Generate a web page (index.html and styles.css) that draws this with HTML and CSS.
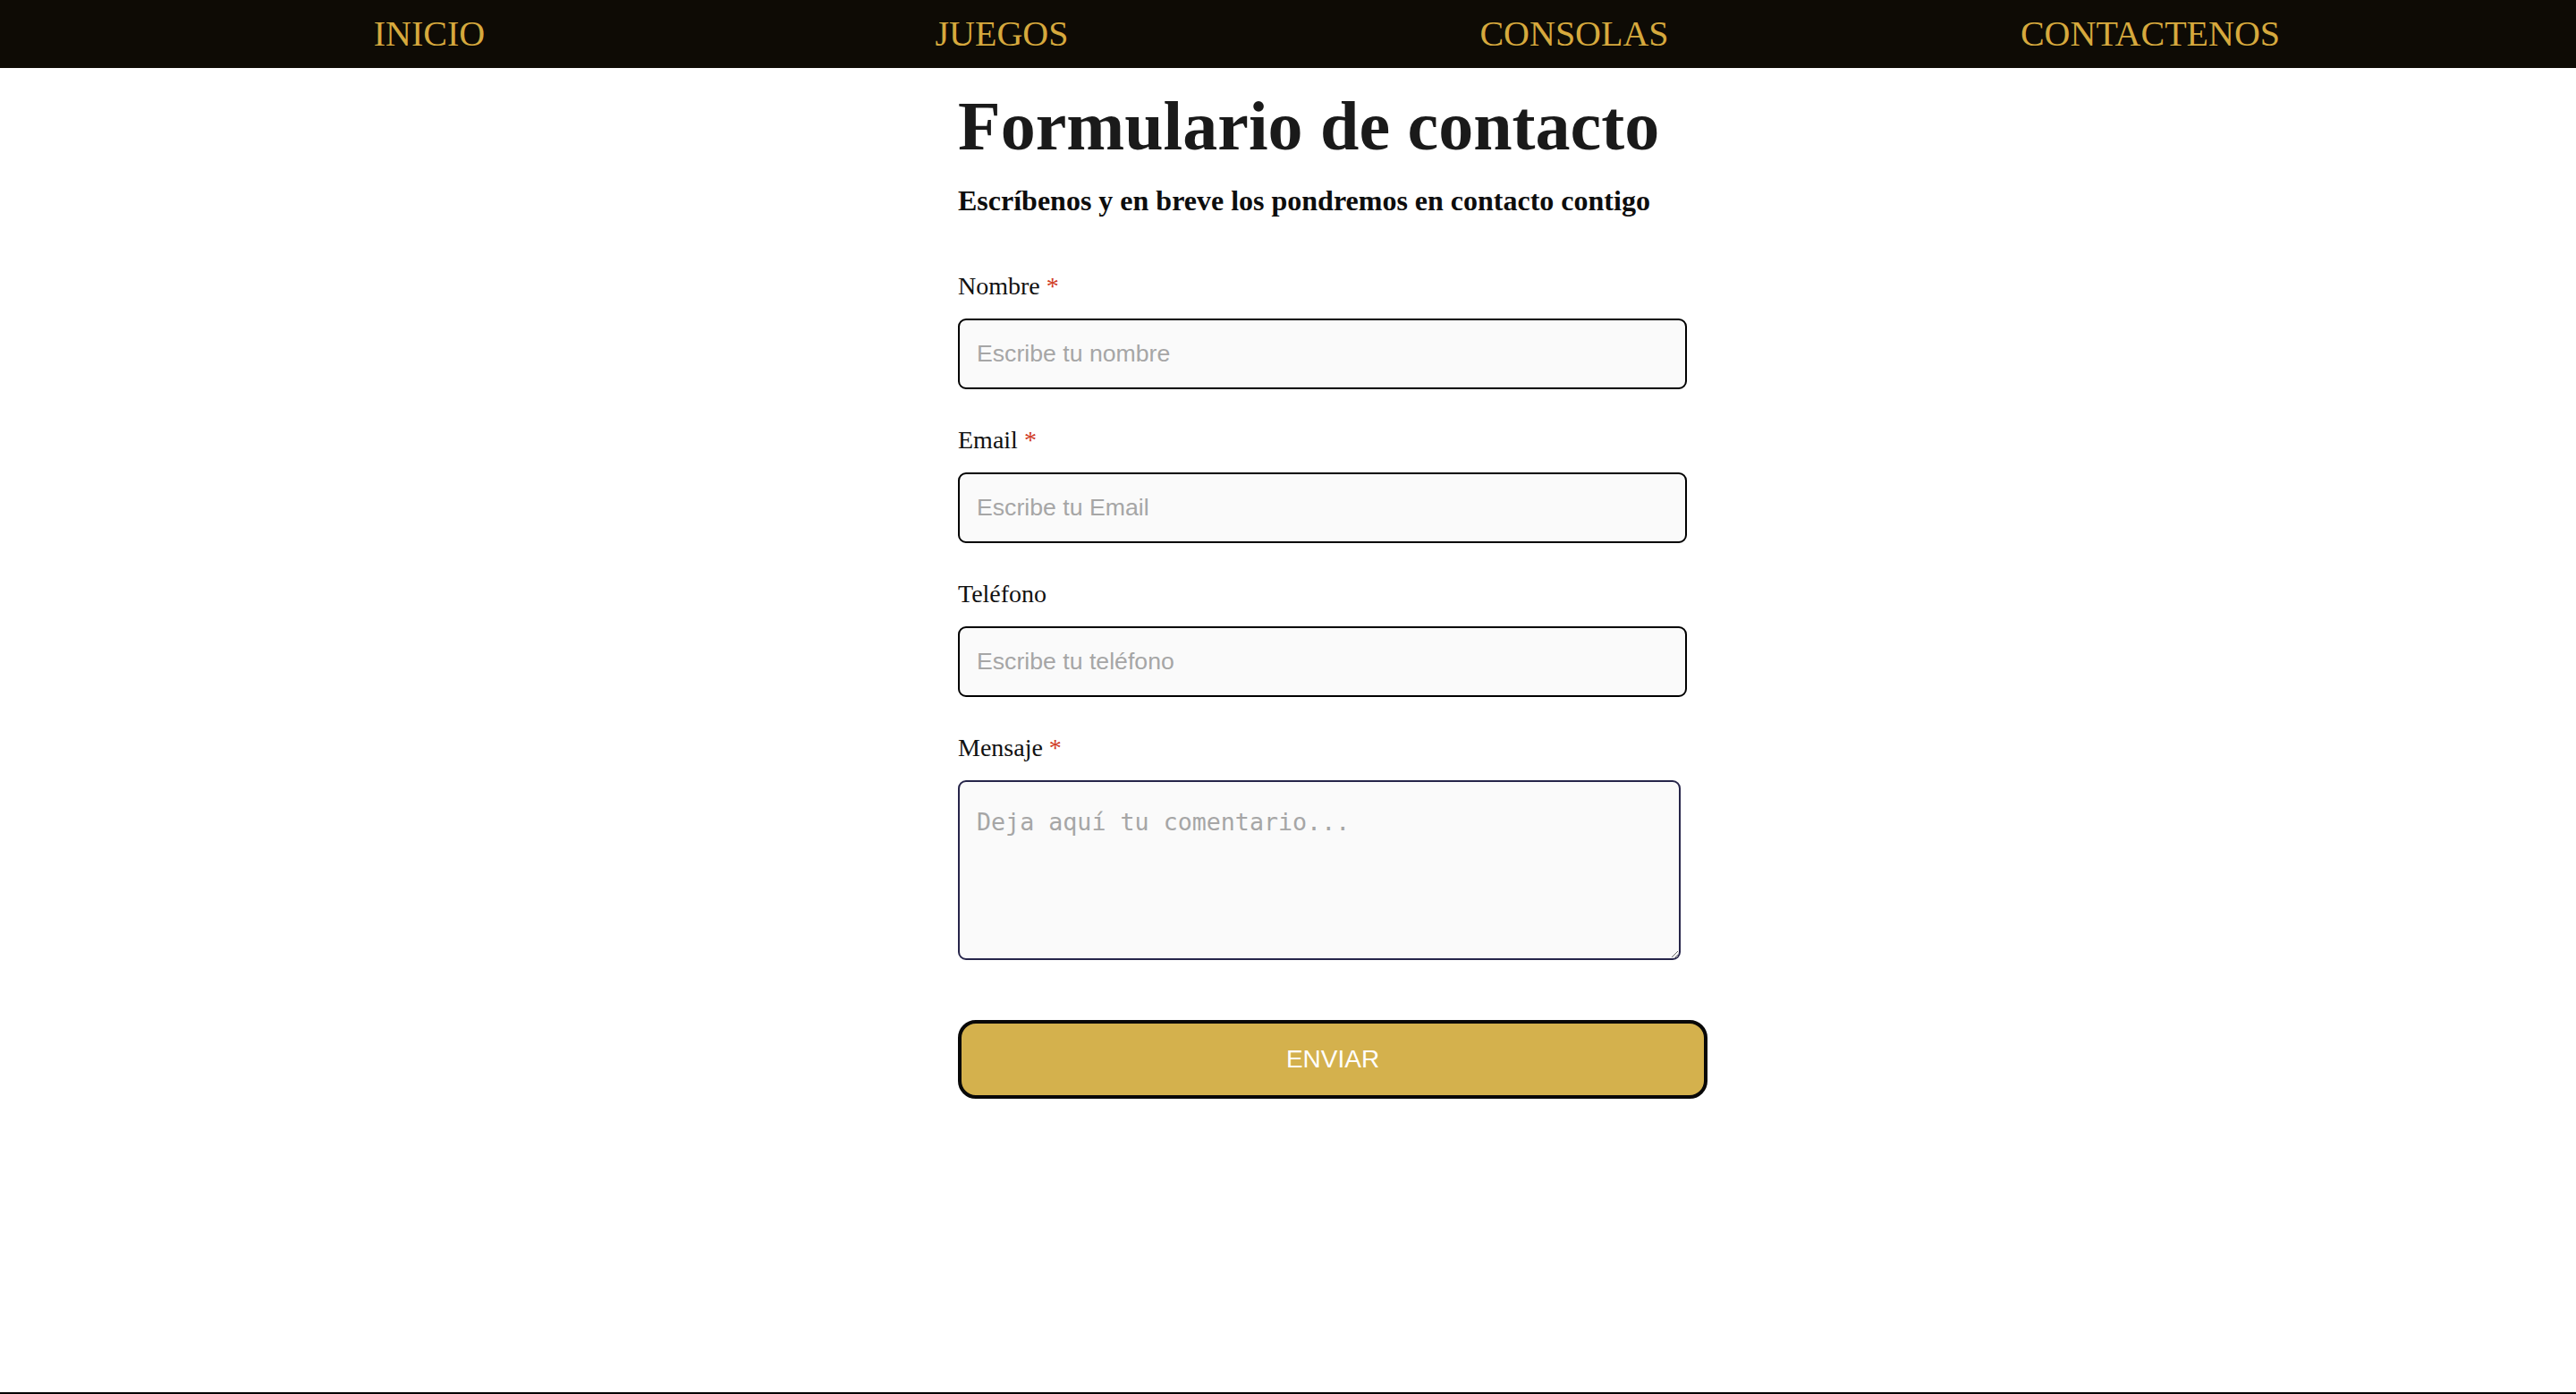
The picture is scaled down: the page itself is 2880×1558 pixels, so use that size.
FILE: index.html
```html
<!DOCTYPE html>
<html lang="es">
<head>
<meta charset="utf-8">
<title>Formulario de contacto</title>
<link rel="stylesheet" href="styles.css">
</head>
<body>
  <nav class="topnav">
    <a class="nav-link" href="#">INICIO</a>
    <a class="nav-link" href="#">JUEGOS</a>
    <a class="nav-link" href="#">CONSOLAS</a>
    <a class="nav-link nav-link-last" href="#">CONTACTENOS</a>
  </nav>
  <main class="page">
    <h1 class="title">Formulario de contacto</h1>
    <h3 class="subtitle">Escríbenos y en breve los pondremos en contacto contigo</h3>
    <form class="form">
      <div class="field">
        <label class="label" for="nombre">Nombre <span class="req">*</span></label>
        <input class="input" id="nombre" type="text" placeholder="Escribe tu nombre">
      </div>
      <div class="field">
        <label class="label" for="email">Email <span class="req">*</span></label>
        <input class="input" id="email" type="email" placeholder="Escribe tu Email">
      </div>
      <div class="field">
        <label class="label" for="tel">Teléfono</label>
        <input class="input" id="tel" type="tel" placeholder="Escribe tu teléfono">
      </div>
      <div class="field">
        <label class="label" for="msg">Mensaje <span class="req">*</span></label>
        <textarea class="textarea" id="msg" placeholder="Deja aquí tu comentario..."></textarea>
      </div>
      <button class="submit" type="button">ENVIAR</button>
    </form>
  </main>
  <footer class="footer"></footer>
</body>
</html>
```

FILE: styles.css
```css
html, body {
  margin: 0;
  padding: 0;
}

body {
  background: #ffffff;
  font-family: "Liberation Serif", "Times New Roman", serif;
  color: #111111;
  height: 100vh;
  overflow: hidden;
  display: flex;
  flex-direction: column;
}

.topnav {
  background: #0e0b05;
  height: 76px;
  flex-shrink: 0;
  padding: 0 160px;
  display: grid;
  grid-template-columns: repeat(4, 1fr);
  align-items: center;
}

.nav-link {
  font-family: "Liberation Serif", "Times New Roman", serif;
  font-size: 40px;
  line-height: 76px;
  color: #d6a93d;
  text-decoration: none;
  text-align: center;
}

.nav-link-last {
  padding-left: 8px;
}

.page {
  width: 738px;
  margin: 0 auto;
}

.title {
  margin: 20px 0 0;
  font-size: 78px;
  line-height: 90px;
  font-weight: bold;
  color: #1a1a1a;
  white-space: nowrap;
}

.subtitle {
  margin: 18px 0 0;
  font-size: 32px;
  line-height: 40px;
  font-weight: bold;
  color: #0d0d0d;
  white-space: nowrap;
}

.form {
  margin-top: 60px;
  display: flex;
  flex-direction: column;
}

.field {
  display: flex;
  flex-direction: column;
  align-items: flex-start;
  margin-bottom: 41px;
}

.field:last-of-type {
  margin-bottom: 0;
}

.label {
  font-size: 28px;
  line-height: 32px;
  color: #111111;
  margin-bottom: 20px;
}

.req {
  color: #d03a1e;
}

.input {
  box-sizing: border-box;
  width: 815px;
  height: 79px;
  border: 2px solid #000000;
  border-radius: 9px;
  background: #fafafa;
  padding: 0 19px;
  font-family: "Liberation Sans", Arial, sans-serif;
  font-size: 26.67px;
  color: #111111;
  outline: none;
}

.input::placeholder {
  color: #a6a6a6;
}

.textarea {
  box-sizing: border-box;
  width: 808px;
  height: 201px;
  border: 2px solid #26254a;
  border-radius: 9px;
  background: #fafafa;
  padding: 29px 19px;
  font-family: "DejaVu Sans Mono", "Liberation Mono", monospace;
  font-size: 26.67px;
  color: #111111;
  outline: none;
}

.textarea::placeholder {
  color: #a6a6a6;
}

.submit {
  box-sizing: border-box;
  margin-top: 67px;
  width: 838px;
  height: 88px;
  border: 4px solid #080808;
  border-radius: 20px;
  background: #d4b14d;
  color: #ffffff;
  font-family: "Liberation Sans", Arial, sans-serif;
  font-size: 28px;
  cursor: pointer;
}

.footer {
  margin-top: auto;
  flex-shrink: 0;
  height: 2px;
  background: #000000;
}
```
